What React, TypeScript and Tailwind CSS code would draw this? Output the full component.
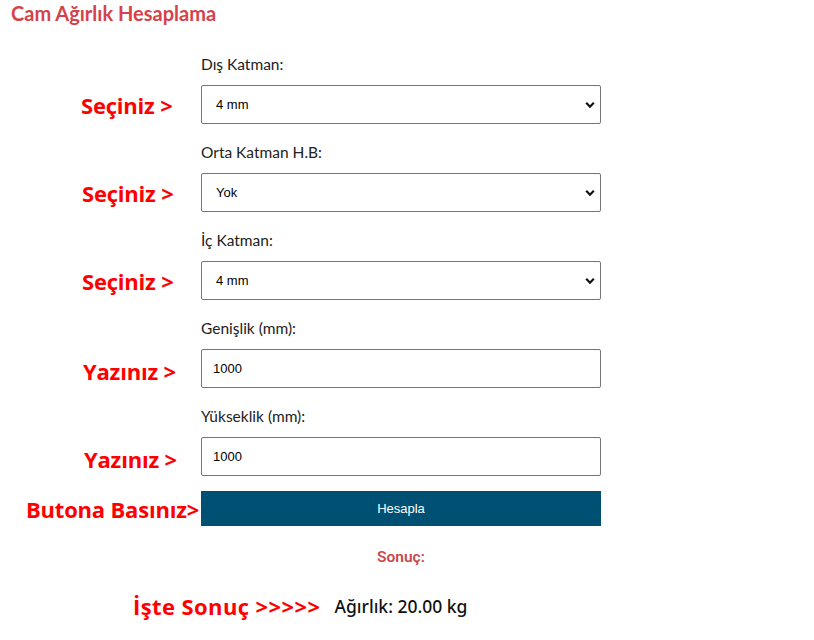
import type { ReactNode } from "react";

const annot = "font-['Open_Sans',sans-serif] font-bold text-[#ff0000] text-[22px] leading-none tracking-[-0.2px]";

function Chevron() {
  return (
    <svg viewBox="0 0 10 7" className="pointer-events-none absolute right-[6px] top-1/2 h-[7px] w-[10px] -translate-y-1/2">
      <polyline points="1.2,1.3 5,5.2 8.8,1.3" fill="none" stroke="#111" strokeWidth="2.2" />
    </svg>
  );
}

function Field({
  label,
  note,
  noteX,
  first,
  children,
}: {
  label: string;
  note: string;
  noteX: string;
  first?: boolean;
  children: ReactNode;
}) {
  return (
    <>
      <div />
      <div
        className={`${first ? "pt-0" : "pt-[18px]"} pb-[11px] font-['Lato',sans-serif] text-[15.5px] leading-[20px] text-[#222]`}
      >
        {label}
      </div>
      <div className={`flex items-center ${noteX}`}>
        <span className={annot}>{note}</span>
      </div>
      {children}
    </>
  );
}

function SelectBox({ value }: { value: string }) {
  return (
    <div className="relative h-[39px]">
      <select
        defaultValue={value}
        className="h-full w-full appearance-none rounded-[2px] border border-[#767676] bg-white pl-[14px] font-['Liberation_Sans',sans-serif] text-[13px] text-black outline-none"
      >
        <option>{value}</option>
      </select>
      <Chevron />
    </div>
  );
}

function TextBox({ value }: { value: string }) {
  return (
    <input
      defaultValue={value}
      className="h-[39px] w-full rounded-[2px] border border-[#767676] bg-white pl-[11px] font-['Liberation_Sans',sans-serif] text-[13px] text-black outline-none"
    />
  );
}

export default function App() {
  return (
    <div className="h-[640px] w-[814px] bg-white">
      <h1 className="pl-[11px] pt-[1px] font-['Lato',sans-serif] text-[20px] font-bold leading-[24px] text-[#d4434b]">
        Cam Ağırlık Hesaplama
      </h1>
      <div className="mt-[29px] grid grid-cols-[201px_400px]">
        <Field label="Dış Katman:" note="Seçiniz >" noteX="pl-[81px]" first>
          <SelectBox value="4 mm" />
        </Field>
        <Field label="Orta Katman H.B:" note="Seçiniz >" noteX="pl-[82px]">
          <SelectBox value="Yok" />
        </Field>
        <Field label="İç Katman:" note="Seçiniz >" noteX="pl-[82px]">
          <SelectBox value="4 mm" />
        </Field>
        <Field label="Genişlik (mm):" note="Yazınız >" noteX="pl-[83px] pt-[4px]">
          <TextBox value="1000" />
        </Field>
        <Field label="Yükseklik (mm):" note="Yazınız >" noteX="pl-[84px] pt-[5px]">
          <TextBox value="1000" />
        </Field>
        <div className="mt-[15px] flex items-center pl-[26px]">
          <span className={annot}>Butona Basınız&gt;</span>
        </div>
        <button className="mt-[15px] h-[35px] bg-[#005073] font-['Liberation_Sans',sans-serif] text-[13px] text-white">
          Hesapla
        </button>
        <div />
        <div className="pt-[21px] text-center font-['Roboto',sans-serif] text-[15.5px] font-semibold leading-[20px] text-[#c9484b]">
          Sonuç:
        </div>
      </div>
      <div className="mt-[28px] flex items-center pl-[133px]">
        <span className={`${annot} tracking-[0.4px]`}>İşte Sonuç &gt;&gt;&gt;&gt;&gt;</span>
        <span className="ml-[14px] font-['Noto_Sans',sans-serif] text-[17.5px] font-medium leading-[22px] text-[#111]">
          Ağırlık: 20.00 kg
        </span>
      </div>
    </div>
  );
}
